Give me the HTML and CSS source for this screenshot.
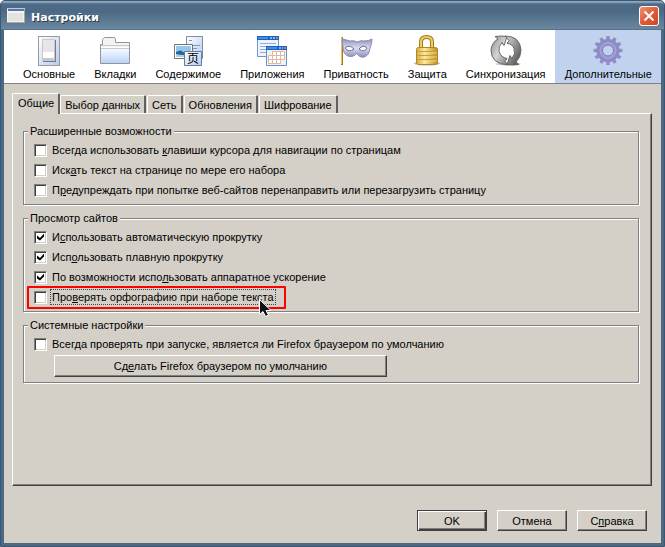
FILE: index.html
```html
<!DOCTYPE html>
<html lang="ru">
<head>
<meta charset="utf-8">
<title>Настройки</title>
<link rel="stylesheet" href="styles.css">
</head>
<body>
<div class="window">
  <header class="titlebar">
    <svg class="app-icon" width="18" height="15" viewBox="0 0 18 15"><rect width="18" height="15" fill="#aaa79f"/><rect width="17" height="14" fill="#f5f4f0"/><rect x="1" y="5" width="15" height="8" fill="#e5e3dd"/><rect width="18" height="1" fill="#bbc8d8"/><rect x="1" y="1" width="16" height="2" fill="#5576b5"/></svg>
    <h1>Настройки</h1>
    <button class="close" aria-label="Закрыть"><svg width="18" height="18" viewBox="0 0 18 18"><path d="M4.500 4.500l9 9M13.500 4.500l-9 9" stroke="#fff" stroke-width="2"/></svg></button>
  </header>
  <nav class="toolbar">
    <button class="tool">
      <svg width="32" height="32" viewBox="0 0 32 32"><defs><linearGradient id="blue" x2="1" y2="1"><stop stop-color="#fff"/><stop offset="1" stop-color="#b2cbf3"/></linearGradient><linearGradient id="fold" y2="1" x2="0"><stop stop-color="#fff"/><stop offset="1" stop-color="#b9d2fa"/></linearGradient></defs><rect x="5.500" y="2.500" width="21" height="29" fill="url(#blue)" stroke="#999b9e"/><rect x="10" y="6" width="13" height="22" fill="#777a80"/><rect x="9" y="5" width="13" height="22" fill="#c8c8c8"/><rect x="10" y="6" width="11" height="13" fill="#e5e6e5"/><rect x="10" y="18" width="11" height="6" fill="#fff"/></svg>
      <span>Основные</span>
    </button>
    <button class="tool">
      <svg width="32" height="32" viewBox="0 0 32 32"><path d="M1.500 29.500v-19h2v-5l2-2h9q2 0 2 2v3h14v21z" fill="#f3f3f3" stroke="#929599"/><path d="M2 13h28v16H2z" fill="url(#fold)"/><path d="M2 11.500h28M2 14.500h28" stroke="#c6cbd1"/></svg>
      <span>Вкладки</span>
    </button>
    <button class="tool">
      <svg width="32" height="32" viewBox="0 0 32 32"><path d="M14.500 2.500h16v22h-16z" fill="url(#blue)" stroke="#858c95"/><path d="M17 6.500h3M17 11.500h11M17 14.500h8M25 18.500h3M25 21.500h3" stroke="#8198ae"/><path d="M2.500 10.500h18v14h-18z" fill="#fff" stroke="#6d757e"/><path d="M4 12h15v11H4z" fill="#95c8ef"/><path d="M4 18q5-3 7 0l8 2v3H4z" fill="#23699c"/><path d="M4 20q7 2 15 0v3H4z" fill="#afcfd9"/><path d="M12.500 17.500h17v14h-17z" fill="url(#blue)" stroke="#667e9d"/><text class="page-glyph" x="15" y="29">页</text></svg>
      <span>Содержимое</span>
    </button>
    <button class="tool">
      <svg width="32" height="32" viewBox="0 0 32 32"><path d="M1.500 2.500h21v20h-21z" fill="#edf4fd" stroke="#6e96c8"/><path d="M1 2h22v4H1z" fill="#1763c2"/><path d="M2 4h10" stroke="#72b6fa"/><path d="M14 4h2m1 0h2" stroke="#fff"/><path d="M20 4h2" stroke="#ef7040" stroke-width="2"/><path d="M4 9.500h16M4 12.500h16M4 15.500h6M4 18.500h6" stroke="#91abe0"/><path d="M10.500 12.500h20v19h-20z" fill="#edf2fa" stroke="#6e8fc8"/><path d="M10 12h21v4H10z" fill="#1763c2"/><path d="M11 14h10" stroke="#72b6fa"/><path d="M23 14h2m1 0h1" stroke="#fff"/><path d="M28 14h2" stroke="#ef7040" stroke-width="2"/><g fill="#fff" stroke="#e2b6a3"><path d="M16.500 17.500h12v4h-12zM12.500 21.500h16v4h-16zM12.500 25.500h12v4h-12zM16.500 17.500v12M20.500 17.500v12M24.500 17.500v12"/></g></svg>
      <span>Приложения</span>
    </button>
    <button class="tool">
      <svg width="34" height="32" viewBox="0 0 34 32"><defs><linearGradient id="mask" y2="1" x2="0"><stop stop-color="#8e8eba"/><stop offset=".5" stop-color="#dcdcf0"/><stop offset="1" stop-color="#8c8cbb"/></linearGradient></defs><path d="M3 3v28" stroke="#a57b15" stroke-width="2"/><path d="M2.500 3v27" stroke="#e8c65b"/><path d="M3 5q5 1 8 2 4-1 7 1 4-2 7-1 5 0 8-2 0 5-2 9-1 8-6 9-5 1-7-4-4 5-9 3-5-2-5-9-1-4-1-8z" fill="url(#mask)" stroke="#8c8cb4"/><path d="M6 14q4-4 9 1-5 4-9-1zM20 15q4-5 8-1-3 5-8 1z" fill="#fff" stroke="#6e6e96"/></svg>
      <span>Приватность</span>
    </button>
    <button class="tool">
      <svg width="32" height="32" viewBox="0 0 32 32"><defs><linearGradient id="gold"><stop stop-color="#d8ad42"/><stop offset=".4" stop-color="#ffe99c"/><stop offset="1" stop-color="#bc8b20"/></linearGradient></defs><ellipse cx="16" cy="29.500" rx="13" ry="2" fill="#bbb"/><path d="M10 15V8q0-5 5.500-5T21 8v7" fill="none" stroke="#a47b1b" stroke-width="4"/><path d="M10 15V8q0-5 5.500-5T21 8v7" fill="none" stroke="#edce66" stroke-width="2"/><rect x="5.500" y="13.500" width="21" height="17" rx="2" fill="url(#gold)" stroke="#b0861f"/><path d="M6 17.500h20M6 21.500h20M6 25.500h20" stroke="#c69c3d"/><path d="M16 19h10M16 23h10M16 27h10" stroke="#f3d577"/></svg>
      <span>Защита</span>
    </button>
    <button class="tool">
      <svg width="32" height="32" viewBox="0 0 32 32"><defs><linearGradient id="steel" x2="1" y2="1"><stop stop-color="#888"/><stop offset=".5" stop-color="#d5d5d5"/><stop offset="1" stop-color="#777"/></linearGradient><linearGradient id="dark" x2="1" y2="1"><stop stop-color="#ddd"/><stop offset="1" stop-color="#444"/></linearGradient></defs><ellipse cx="18" cy="30" rx="13" ry="1.500" fill="#ccc"/><path d="M18 31Q1 30 1 16 2 8 8 5L5 2.500q7-1 12 0l-3 9-2-3q-4 4-3 9 2 6 8 7l-2 3z" fill="url(#steel)" stroke="#666"/><path d="M15 2q15 0 16 14 0 7-5 12l3 2.500q-7 1-12 0l3-9 2 3q4-5 2-10-2-5-7-5l2-3z" fill="url(#dark)" stroke="#666"/></svg>
      <span>Синхронизация</span>
    </button>
    <button class="tool selected">
      <svg width="32" height="32" viewBox="0 0 32 32"><defs><radialGradient id="gear"><stop offset=".35" stop-color="#8585c5"/><stop offset=".6" stop-color="#aaa9df"/><stop offset="1" stop-color="#8c8bc4"/></radialGradient></defs><g fill="#8e8dc5"><g id="teeth"><path id="tooth" d="M14 6l.5-4h3l.5 4v20l-.5 5h-3l-.5-5z"/><use href="#tooth" transform="rotate(30 16 16.500)"/><use href="#tooth" transform="rotate(60 16 16.500)"/></g><use href="#teeth" transform="rotate(90 16 16.500)"/></g><circle cx="16" cy="16.500" r="8.500" fill="none" stroke="url(#gear)" stroke-width="6"/><circle cx="16" cy="16.500" r="5.500" fill="#c1d2ee" stroke="#7978b8"/><circle cx="16" cy="16.500" r="8" fill="none" stroke="#aaa8dc"/></svg>
      <span>Дополнительные</span>
    </button>
  </nav>
  <main class="content">
    <div class="tabs" role="tablist">
      <button class="tab active" role="tab" aria-selected="true">Общие</button>
      <button class="tab" role="tab">Выбор данных</button>
      <button class="tab" role="tab">Сеть</button>
      <button class="tab" role="tab">Обновления</button>
      <button class="tab" role="tab">Шифрование</button>
    </div>
    <section class="panel">
      <fieldset>
        <legend>Расширенные возможности</legend>
        <label class="row"><input type="checkbox"><span>Всегда использовать <u>к</u>лавиши курсора для навигации по страницам</span></label>
        <label class="row"><input type="checkbox"><span>Иск<u>а</u>ть текст на странице по мере его набора</span></label>
        <label class="row"><input type="checkbox"><span>П<u>р</u>едупреждать при попытке веб-сайтов перенаправить или перезагрузить страницу</span></label>
      </fieldset>
      <fieldset>
        <legend>Просмотр сайтов</legend>
        <label class="row"><input type="checkbox" checked><span>И<u>с</u>пользовать автоматическую прокрутку</span></label>
        <label class="row"><input type="checkbox" checked><span>Исп<u>о</u>льзовать плавную прокрутку</span></label>
        <label class="row"><input type="checkbox" checked><span>По возможности испо<u>л</u>ьзовать аппаратное ускорение</span></label>
        <label class="row marked"><input type="checkbox"><span class="focused">Про<u>в</u>ерять орфографию при наборе текста</span>
          <svg class="cursor" width="13" height="19" viewBox="0 0 13 19"><path d="M.5.500v15l3.500-3 2.500 5 3-1.500-2.500-4.500h5z" fill="#111" stroke="#fff"/></svg>
        </label>
      </fieldset>
      <fieldset>
        <legend>Системные настройки</legend>
        <label class="row"><input type="checkbox"><span>Всег<u>д</u>а проверять при запуске, является ли Firefox браузером по умолчанию</span></label>
        <button class="button wide">Сд<u>е</u>лать Firefox браузером по умолчанию</button>
      </fieldset>
    </section>
    <footer class="actions">
      <button class="button default">OK</button>
      <button class="button">Отмена</button>
      <button class="button">С<u>п</u>равка</button>
    </footer>
  </main>
</div>
</body>
</html>
```
FILE: styles.css
```css
* { box-sizing: border-box; }
body {
  margin: 0;
  background: #fff;
  color: #000;
  font: 11px/14px "Liberation Sans", Arial, sans-serif;
}
button { font: inherit; color: inherit; margin: 0; }
u { text-underline-offset: 1px; }
.window {
  display: flex;
  flex-direction: column;
  min-height: 100vh;
  background: #4a6984;
  border: 1px solid #3c566f;
  border-radius: 5px 5px 0 0;
  padding: 0 3px 3px;
  overflow: hidden;
}
.titlebar {
  display: flex;
  align-items: center;
  height: 29px;
  margin: 0 -3px;
  padding: 0 5px 0 6px;
  background: linear-gradient(#8fa8bd 0, #8fa8bd 1px, #4d6b87 3px, #4b6984 10px, #6b879f 28px, #3f5971 29px);
}
.titlebar h1 {
  flex: 1;
  margin: 4px 0 0 6px;
  color: #fff;
  font: bold 11px/16px "DejaVu Sans", sans-serif;
  text-shadow: 1px 1px #263b4e;
}
.close {
  width: 20px;
  height: 20px;
  padding: 0;
  border: 1px solid #fff;
  border-radius: 3px;
  background: linear-gradient(135deg, #ef9376, #e35a37 50%, #cf4421);
}
.close svg { display: block; }
.toolbar {
  display: flex;
  gap: 1px;
  background: #fff;
  border-bottom: 1px solid #808080;
  padding-left: 10px;
}
.tool {
  display: flex;
  flex-direction: column;
  align-items: center;
  height: 53px;
  padding: 4px 9px 0;
  border: 0;
  background: none;
  line-height: 16px;
}
.tool svg { flex: none; }
.tool.selected { flex-grow: 1; background: #c1d2ee; }
.page-glyph { font: 12px "Noto Sans CJK SC", sans-serif; }
.content {
  display: flex;
  flex: 1;
  flex-direction: column;
  padding: 9px 9px 12px 8px;
  background: #d4d0c8;
}
.tabs { display: flex; align-items: flex-end; }
.tab {
  height: 18px;
  padding: 0 4px;
  margin-right: 1px;
  border: 1px solid #fff;
  border-bottom: 0;
  border-right: 2px solid #606060;
  border-radius: 2px 2px 0 0;
  background: #d4d0c8;
}
.tab.active {
  height: 21px;
  margin-right: 0;
  margin-bottom: -1px;
  padding: 0 4px 2px 5px;
  z-index: 1;
}
.panel {
  flex: 1;
  padding: 10px 12px 10px 10px;
  border: 1px solid;
  border-color: #fff #404040 #404040 #fff;
  box-shadow: inset -1px -1px #808080;
}
fieldset {
  min-width: 0;
  margin: 0 0 6px;
  padding: 2px 10px 4px;
  border: 1px solid #808080;
  box-shadow: 1px 1px #fff, inset 1px 1px #fff;
}
legend {
  margin-left: -6px;
  padding: 0 2px;
  background: #d4d0c8;
}
.row {
  display: flex;
  align-items: center;
  width: max-content;
  height: 20px;
  gap: 4px;
}
.row span { padding: 0 1px; }
input[type="checkbox"] {
  appearance: none;
  width: 13px;
  height: 13px;
  margin: 0;
  border: 1px solid;
  border-color: #808080 #fff #fff #808080;
  background: #fff;
  box-shadow: inset 1px 1px #404040, inset -1px -1px #d4d0c8;
}
input:checked::after {
  content: "";
  display: block;
  width: 7px;
  height: 7px;
  margin: 2px;
  background: #000;
  clip-path: polygon(0 29%, 43% 64%, 100% 0, 100% 43%, 43% 100%, 0 71%);
}
.marked { position: relative; }
.marked::before {
  content: "";
  position: absolute;
  inset: -1px -11px -2px -7px;
  border: 2px solid #f00;
  border-radius: 1px;
}
.focused { outline: 1px dotted #444; }
.cursor { position: absolute; right: 3px; top: 12px; }
.button {
  min-width: 70px;
  height: 21px;
  padding: 0 8px;
  border: 1px solid;
  border-color: #fff #404040 #404040 #fff;
  background: #d4d0c8;
  box-shadow: inset -1px -1px #808080;
}
.wide { display: block; width: 56%; min-width: max-content; height: 22px; margin: 1px 0 1px 20px; }
.default { border-color: #404040; box-shadow: inset 1px 1px #fff, inset -1px -1px #404040, inset -2px -2px #808080; }
.actions {
  display: flex;
  justify-content: flex-end;
  gap: 10px;
  padding: 24px 5px 0 0;
}
```
